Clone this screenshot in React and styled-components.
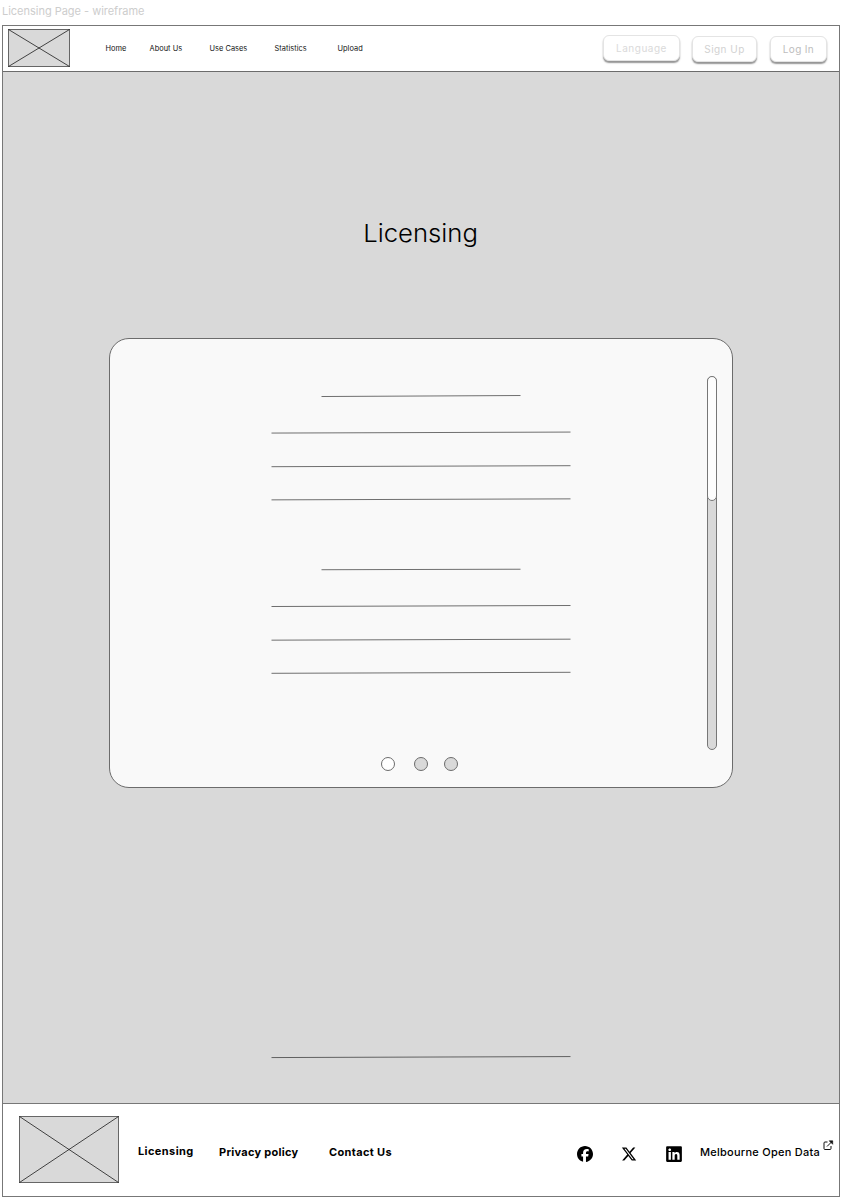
import React from "react";
import styled, { createGlobalStyle } from "styled-components";
import { FaFacebook, FaXTwitter, FaLinkedin } from "react-icons/fa6";

const GlobalStyle = createGlobalStyle`
  * { box-sizing: border-box; }
  body { margin: 0; background: #fff; color: #000; font-family: Inter, "Liberation Sans", sans-serif; }
`;

const Page = styled.div`
  width: 847px;
  height: 1201px;
  padding-left: 2px;
  overflow: hidden;
`;

const FrameLabel = styled.div`
  height: 25px;
  padding-top: 4px;
  font-size: 11px;
  line-height: 15px;
  letter-spacing: -0.02px;
  color: #cdcdcd;
  white-space: nowrap;
`;

const Frame = styled.div`
  display: flex;
  flex-direction: column;
  width: 838px;
  height: 1172px;
  border: 1px solid #777;
`;

const Header = styled.header`
  display: flex;
  height: 46px;
  border-bottom: 1px solid #6c6c6c;
`;

const Placeholder = styled.svg`
  display: block;
  flex: none;
  margin: ${(p) => p.$margin};
`;

const Nav = styled.nav`
  display: flex;
  margin-left: 35.5px;
`;

const NavLink = styled.a`
  width: ${(p) => p.$width}px;
  padding-top: 18px;
  font-size: 7.4px;
  line-height: 10px;
  letter-spacing: 0.04px;
  color: #111;
  white-space: nowrap;
`;

const Actions = styled.div`
  display: flex;
  gap: 12px;
  margin-left: auto;
  padding: 9px 12px 0 0;
`;

const ActionButton = styled.button`
  width: ${(p) => p.$width}px;
  height: 26px;
  margin-top: ${(p) => p.$drop || 0}px;
  margin-left: ${(p) => p.$shift || 0}px;
  padding: 0;
  border: 1px solid #e4e4e4;
  border-radius: 6px;
  background: #fff;
  box-shadow: 0 2px 1.5px rgba(0, 0, 0, 0.42);
  color: ${(p) => p.$color};
  font: 400 10px/22px Inter, sans-serif;
  letter-spacing: ${(p) => p.$spacing}px;
  white-space: nowrap;
`;

const Main = styled.main`
  display: flex;
  flex: 1;
  flex-direction: column;
  align-items: center;
  background: #d9d9d9;
`;

const Title = styled.h1`
  margin: 146px 0 0;
  height: 32px;
  font-size: 24px;
  font-weight: 350;
  line-height: 32px;
  transform: scaleX(1.07);
`;

const Card = styled.section`
  display: flex;
  width: 624px;
  height: 450px;
  margin-top: 88px;
  padding: 37px 15px 0 161px;
  border: 1px solid #6c6c6c;
  border-radius: 20px;
  background: #f9f9f9;
`;

const Content = styled.div`
  display: flex;
  flex-direction: column;
  align-items: center;
  width: 300px;
`;

const Rule = styled.svg`
  display: block;
  flex: none;
  width: ${(p) => p.$width}px;
  height: 4px;
  margin-top: ${(p) => p.$top}px;
`;

const Dots = styled.div`
  display: flex;
  width: 80px;
  margin-top: 82px;
`;

const Dot = styled.span`
  width: 14px;
  height: 14px;
  margin-right: ${(p) => p.$gap || 0}px;
  border: 1px solid #6c6c6c;
  border-radius: 50%;
  background: ${(p) => (p.$active ? "#fff" : "#d9d9d9")};
`;

const ScrollTrack = styled.div`
  width: 10px;
  height: 374px;
  margin-left: auto;
  border: 1px solid #777;
  border-radius: 5px;
  background: #d9d9d9;
`;

const ScrollThumb = styled.div`
  width: 10px;
  height: 125px;
  margin: -1px;
  border: 1px solid #777;
  border-radius: 5px;
  background: #fdfdfd;
`;

const Footer = styled.footer`
  display: flex;
  height: 93px;
  border-top: 1px solid #777;
`;

const FooterNav = styled.nav`
  display: flex;
  margin-left: 19px;
`;

const FooterLink = styled.a`
  flex: none;
  width: ${(p) => p.$width}px;
  padding-top: ${(p) => p.$top}px;
  font-size: 11px;
  font-weight: ${(p) => p.$weight || 700};
  line-height: 16px;
  letter-spacing: ${(p) => p.$spacing}px;
  white-space: nowrap;
`;

const Socials = styled.div`
  display: flex;
  align-items: center;
  gap: 28px;
  height: 18px;
  margin: 41px 0 0 auto;
`;

const DataLink = styled.div`
  display: flex;
  width: 139px;
  margin-left: 17px;
`;

const ExternalIcon = styled.svg`
  flex: none;
  margin-top: 36px;
`;

function CrossBox({ width, height, margin }) {
  return (
    <Placeholder $margin={margin} width={width} height={height}>
      <rect x="0.5" y="0.5" width={width - 1} height={height - 1} fill="#d9d9d9" stroke="#666" />
      <path d={`M.5 .5L${width - 0.5} ${height - 0.5}M${width - 0.5} .5L.5 ${height - 0.5}`} stroke="#000" strokeWidth=".7" />
    </Placeholder>
  );
}

function SketchLine({ width, top, start, rise = 1 }) {
  return (
    <Rule $width={width} $top={top}>
      <line x1=".5" x2={width - 0.5} y1={start} y2={start - rise} stroke="#000" strokeWidth=".56" />
    </Rule>
  );
}

export default function App() {
  return (
    <Page>
      <GlobalStyle />
      <FrameLabel>Licensing Page - wireframe</FrameLabel>
      <Frame>
        <Header>
          <CrossBox width={62} height={38} margin="3px 0 0 5px" />
          <Nav>
            <NavLink $width={44}>Home</NavLink>
            <NavLink $width={60}>About Us</NavLink>
            <NavLink $width={65}>Use Cases</NavLink>
            <NavLink $width={63}>Statistics</NavLink>
            <NavLink $width={40}>Upload</NavLink>
          </Nav>
          <Actions>
            <ActionButton $width={77} $color="#dadada" $spacing={0.5}>Language</ActionButton>
            <ActionButton $width={65} $drop={1} $color="#d2d2d2" $spacing={0.45}>Sign Up</ActionButton>
            <ActionButton $width={57} $drop={1} $shift={1} $color="#bdbdbd" $spacing={0.35}>Log In</ActionButton>
          </Actions>
        </Header>
        <Main>
          <Title>Licensing</Title>
          <Card>
            <Content>
              <SketchLine width={200} top={18} start={2.52} />
              <SketchLine width={300} top={33} start={2.07} />
              <SketchLine width={300} top={29} start={2.7} />
              <SketchLine width={300} top={29} start={2.86} />
              <SketchLine width={200} top={67} start={1.72} rise={0.5} />
              <SketchLine width={300} top={32} start={2.5} />
              <SketchLine width={300} top={30} start={2.17} />
              <SketchLine width={300} top={29} start={2.3} />
              <Dots>
                <Dot $active $gap={19} />
                <Dot $gap={16} />
                <Dot />
              </Dots>
            </Content>
            <ScrollTrack><ScrollThumb /></ScrollTrack>
          </Card>
          <SketchLine width={300} top={267} start={2.57} />
        </Main>
        <Footer>
          <CrossBox width={100} height={67} margin="12px 0 0 16px" />
          <FooterNav>
            <FooterLink $width={81} $top={39} $spacing={0.4}>Licensing</FooterLink>
            <FooterLink $width={110} $top={40} $spacing={0.27}>Privacy policy</FooterLink>
            <FooterLink $width={70} $top={40} $spacing={0.35}>Contact Us</FooterLink>
          </FooterNav>
          <Socials>
            <FaFacebook size={16} />
            <FaXTwitter size={16} />
            <FaLinkedin size={18} />
          </Socials>
          <DataLink>
            <FooterLink $width={123} $top={40} $weight={500} $spacing={0.25}>Melbourne Open Data</FooterLink>
            <ExternalIcon width="11" height="11" viewBox="0 0 11 11" fill="none" stroke="#111">
              <path d="M4.5 2H2Q1 2 1 3V8.5Q1 9.5 2 9.5H7Q8 9.5 8 8.5V6M4 6.5L9 1.5" />
              <path d="M6.2 .8H9.7V4.3Z" fill="#111" strokeWidth=".6" />
            </ExternalIcon>
          </DataLink>
        </Footer>
      </Frame>
    </Page>
  );
}
